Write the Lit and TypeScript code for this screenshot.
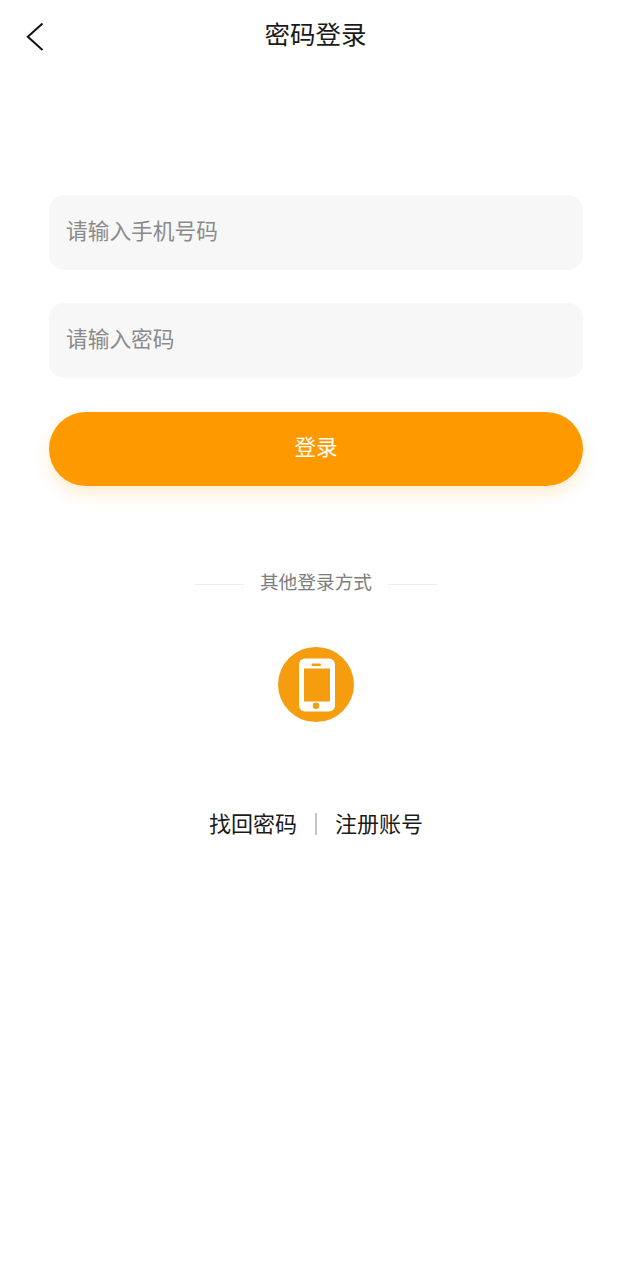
import { LitElement, html, css } from "lit";
import { customElement } from "lit/decorators.js";

@customElement("app-root")
export class AppRoot extends LitElement {
  static styles = css`
    :host {
      display: block;
      width: 630px;
      height: 1280px;
      background: #fff;
      font-family: "Noto Sans CJK SC", "Liberation Sans", sans-serif;
      color: #111;
      overflow: hidden;
    }
    .header {
      position: relative;
      height: 72px;
      display: flex;
      align-items: center;
      justify-content: center;
    }
    .title {
      font-size: 25.5px;
      line-height: 72px;
      margin: 0 0 7px 1px;
      color: #1a1a1a;
    }
    .back {
      position: absolute;
      left: 24px;
      top: 21px;
      width: 22px;
      height: 32px;
    }
    .form {
      margin: 123px 47px 0 49px;
      display: flex;
      flex-direction: column;
      gap: 33px;
    }
    .field {
      height: 75px;
      border-radius: 15px;
      background: #f7f7f7;
      display: flex;
      align-items: center;
      padding-left: 17px;
      font-size: 21.7px;
      color: #8a8a8a;
      box-sizing: border-box;
      padding-bottom: 6px;
    }
    .btn {
      margin-top: 1px;
      height: 74px;
      border-radius: 37px;
      background: #ff9900;
      color: #fff;
      display: flex;
      align-items: center;
      justify-content: center;
      font-size: 21.5px;
      padding-bottom: 7px;
      box-sizing: border-box;
      box-shadow: 0 8px 16px rgba(255, 153, 0, 0.18);
    }
    .lower {
      padding-left: 2px;
      box-sizing: border-box;
    }
    .divider {
      margin-top: 81px;
      display: flex;
      align-items: center;
      justify-content: center;
      gap: 16px;
      font-size: 18.7px;
      line-height: 28px;
      color: #7d7d7d;
    }
    .line {
      width: 49px;
      height: 1px;
      background: #ececec;
      margin-top: 6px;
    }
    .phone {
      margin: 52px auto 0;
      display: block;
      width: 76px;
      height: 75px;
    }
    .links {
      margin-top: 84px;
      display: flex;
      align-items: center;
      justify-content: center;
      font-size: 22px;
      line-height: 32px;
      color: #1a1a1a;
      gap: 18px;
    }
    .sep {
      width: 2px;
      height: 22px;
      background: #c4c4c4;
      margin-top: 3px;
    }
  `;

  render() {
    return html`
      <div class="header">
        <svg class="back" viewBox="0 0 22 32" fill="none" stroke="#111" stroke-width="2">
          <path d="M18.5 2.5 L3.8 15.8 L18.5 29" />
        </svg>
        <div class="title">密码登录</div>
      </div>
      <div class="form">
        <div class="field">请输入手机号码</div>
        <div class="field">请输入密码</div>
        <div class="btn">登录</div>
      </div>
      <div class="lower">
        <div class="divider">
          <span class="line"></span><span>其他登录方式</span><span class="line"></span>
        </div>
        <svg class="phone" viewBox="0 0 76 75">
          <ellipse cx="38" cy="37.5" rx="38" ry="37.5" fill="#f59c0f" />
          <rect x="21" y="11.5" width="36" height="53" rx="6" fill="#fff" />
          <rect x="26" y="21.5" width="26" height="33" fill="#f59c0f" />
          <rect x="33.5" y="16.5" width="9.5" height="2.4" rx="1.2" fill="#f59c0f" />
          <circle cx="38" cy="58.8" r="3.2" fill="#f59c0f" />
        </svg>
        <div class="links">
          <span>找回密码</span><span class="sep"></span><span>注册账号</span>
        </div>
      </div>
    `;
  }
}
